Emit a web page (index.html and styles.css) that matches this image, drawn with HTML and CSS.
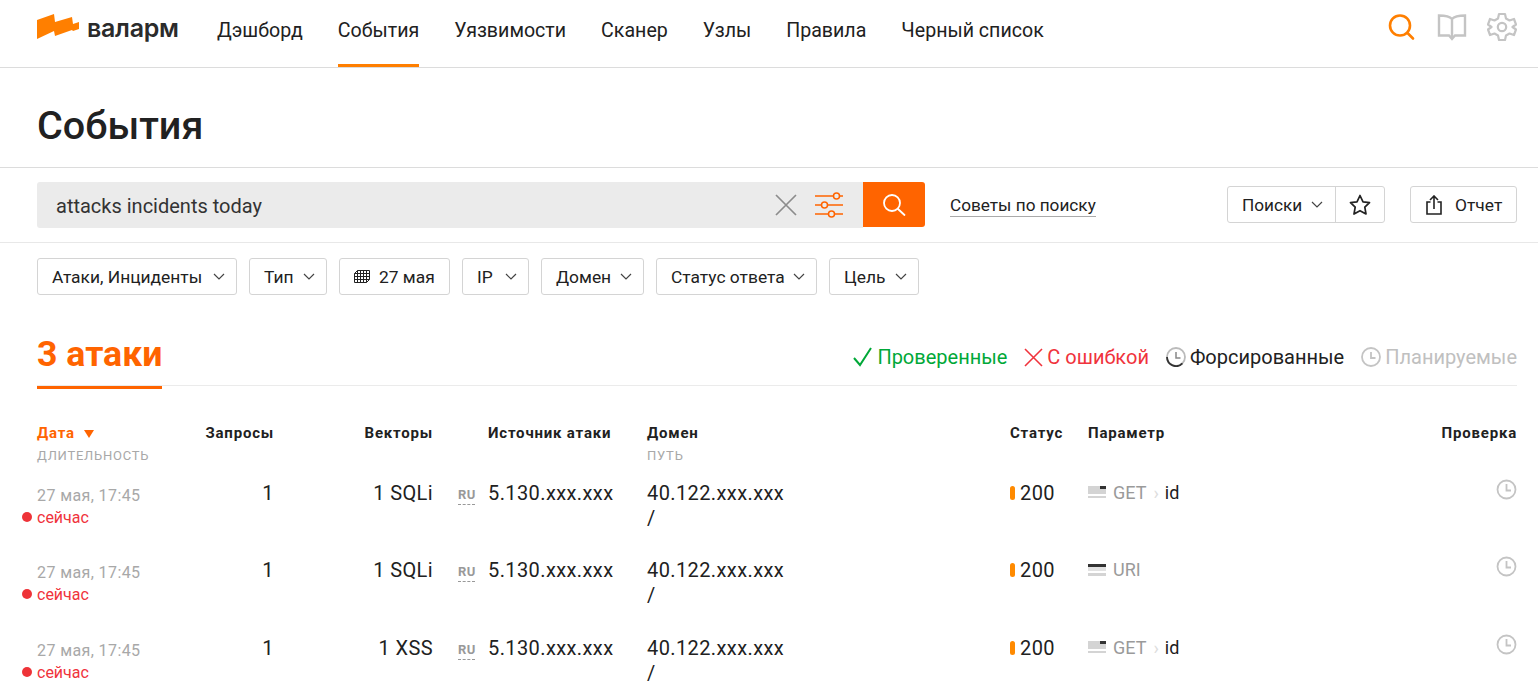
FILE: index.html
```html
<!DOCTYPE html>
<html lang="ru">
<head>
<meta charset="utf-8">
<title>События</title>
<link rel="stylesheet" href="styles.css">
</head>
<body>
<header class="topbar">
  <div class="logo">
    <svg class="logo-mark" width="43" height="26" viewBox="0 0 43 26"><path d="M0 7 L17 1 L18 9 L35 4 L36 11 L42 9 L42 16 L36 18 L35 17 L18 23 L17 18 L0 26 Z" fill="#ff7f00"/></svg>
    <span class="logo-text">валарм</span>
  </div>
  <nav class="nav">
    <a class="nav-item">Дэшборд</a>
    <a class="nav-item active">События</a>
    <a class="nav-item">Уязвимости</a>
    <a class="nav-item">Сканер</a>
    <a class="nav-item">Узлы</a>
    <a class="nav-item">Правила</a>
    <a class="nav-item">Черный список</a>
  </nav>
  <div class="top-icons">
    <svg class="loupe" width="28" height="28" viewBox="0 0 28 28" fill="none" stroke="#ff7f00" stroke-width="2.6" stroke-linecap="round"><circle cx="13" cy="12.5" r="10"/><path d="M20.5 20 L26 25.5"/></svg>
    <svg width="30" height="28" viewBox="0 0 30 28" fill="none" stroke="#c4c4c4" stroke-width="2.4"><path d="M15 6 C12 2.5 6 2.5 2 2.5 V22.5 H12 L15 26 L18 22.5 H28 V2.5 C24 2.5 18 2.5 15 6 Z M15 6 V25"/></svg>
    <svg class="gear" width="30" height="30" viewBox="0 0 30 30" fill="none" stroke="#c4c4c4" stroke-width="2.2" stroke-linejoin="round"><path d="M12 2 H18 L19 6.5 L22.5 8.5 L27 7 L29 12.5 L25.5 15 L29 17.5 L27 23 L22.5 21.5 L19 23.5 L18 28 H12 L11 23.5 L7.5 21.5 L3 23 L1 17.5 L4.5 15 L1 12.5 L3 7 L7.5 8.5 L11 6.5 Z"/><circle cx="15" cy="15" r="4.2"/></svg>
  </div>
</header>

<section class="title-bar"><h1 class="title">События</h1></section>

<section class="search-bar">
  <div class="search-box">
    <span class="search-text">attacks incidents today</span>
    <svg class="clear" width="22" height="22" viewBox="0 0 22 22" stroke="#8c8c8c" stroke-width="1.7" fill="none"><path d="M1 1 L21 21 M21 1 L1 21"/></svg>
    <svg class="tune" width="30" height="28" viewBox="0 0 30 28" stroke="#ff6400" stroke-width="1.5" fill="none"><path d="M1 5 H19 M26 5 H29 M1 14 H7 M14 14 H29 M1 23 H14 M21 23 H29"/><circle cx="22.5" cy="5" r="3"/><circle cx="10.5" cy="14" r="3"/><circle cx="17.5" cy="23" r="3"/></svg>
  </div>
  <button class="search-btn"><svg width="24" height="24" viewBox="0 0 24 24" fill="none" stroke="#fff" stroke-width="1.8" stroke-linecap="round"><circle cx="10" cy="10" r="8"/><path d="M16 16 L22.5 22"/></svg></button>
  <a class="tips">Советы по поиску</a>
  <div class="btn-group">
    <span class="btn-part wide">Поиски<svg class="chev" width="12" height="7" viewBox="0 0 12 7" fill="none" stroke="#444" stroke-width="1.2"><path d="M1 1 L6 6 L11 1"/></svg></span>
    <span class="btn-part star"><svg width="22" height="21" viewBox="0 0 22 21" fill="none" stroke="#222" stroke-width="1.7" stroke-linejoin="round"><path d="M11 1.5 L14 7.8 L20.5 8.6 L15.8 13.2 L17 20 L11 16.7 L5 20 L6.2 13.2 L1.5 8.6 L8 7.8 Z"/></svg></span>
  </div>
  <span class="btn report"><svg width="16" height="20" viewBox="0 0 16 20" fill="none" stroke="#222" stroke-width="1.6"><path d="M4.5 7 H1 V19 H15 V7 H11.5 M8 14 V1.5 M4 5 L8 1 L12 5"/></svg>Отчет</span>
</section>

<section class="filters">
  <span class="btn f1">Атаки, Инциденты<svg class="chev" width="12" height="7" viewBox="0 0 12 7" fill="none" stroke="#444" stroke-width="1.2"><path d="M1 1 L6 6 L11 1"/></svg></span>
  <span class="btn f2">Тип<svg class="chev" width="12" height="7" viewBox="0 0 12 7" fill="none" stroke="#444" stroke-width="1.2"><path d="M1 1 L6 6 L11 1"/></svg></span>
  <span class="btn f3"><svg class="cal" width="16" height="13" viewBox="0 0 16 13" fill="none" stroke="#222" stroke-width="1"><path d="M3.5 .5 H15.5 V9.5 L12.5 12.5 H.5 V3.5 Z M.5 3.5 H15.5 M.5 6.5 H15.5 M.5 9.5 H15.5 M3.5 .5 V12.5 M6.5 .5 V12.5 M9.5 .5 V12.5 M12.5 .5 V12.5"/></svg>27 мая</span>
  <span class="btn f4">IP<svg class="chev" width="12" height="7" viewBox="0 0 12 7" fill="none" stroke="#444" stroke-width="1.2"><path d="M1 1 L6 6 L11 1"/></svg></span>
  <span class="btn f5">Домен<svg class="chev" width="12" height="7" viewBox="0 0 12 7" fill="none" stroke="#444" stroke-width="1.2"><path d="M1 1 L6 6 L11 1"/></svg></span>
  <span class="btn f6">Статус ответа<svg class="chev" width="12" height="7" viewBox="0 0 12 7" fill="none" stroke="#444" stroke-width="1.2"><path d="M1 1 L6 6 L11 1"/></svg></span>
  <span class="btn f7">Цель<svg class="chev" width="12" height="7" viewBox="0 0 12 7" fill="none" stroke="#444" stroke-width="1.2"><path d="M1 1 L6 6 L11 1"/></svg></span>
</section>

<section class="tabs">
  <h2 class="count">3 атаки</h2>
  <div class="legend">
    <span class="legend-item green"><svg width="20" height="20" viewBox="0 0 20 20" fill="none" stroke="#00a838" stroke-width="2"><path d="M1 11 L7 18 L18 1"/></svg>Проверенные</span>
    <span class="legend-item red"><svg width="19" height="19" viewBox="0 0 19 19" fill="none" stroke="#f0333c" stroke-width="1.6"><path d="M1 1 L18 18 M18 1 L1 18"/></svg>С ошибкой</span>
    <span class="legend-item dark"><svg width="20" height="20" viewBox="0 0 20 20" fill="none" stroke-width="1.8"><circle cx="10" cy="10" r="9" stroke="#bbb"/><path d="M1 10 A9 9 0 0 0 16.4 16.4" stroke="#333"/><path d="M10 5 V11 H14.5" stroke="#888" stroke-width="1.5"/></svg>Форсированные</span>
    <span class="legend-item grey"><svg width="20" height="20" viewBox="0 0 20 20" fill="none" stroke="#c4c4c4" stroke-width="1.8"><circle cx="10" cy="10" r="9"/><path d="M10 5 V11 H14.5"/></svg>Планируемые</span>
  </div>
</section>

<section class="table">
  <div class="row head">
    <div><div class="th sort">Дата<span class="arrow"></span></div><div class="sub">ДЛИТЕЛЬНОСТЬ</div></div>
    <div class="th right">Запросы</div>
    <div class="th right">Векторы</div>
    <div class="th src-head">Источник атаки</div>
    <div><div class="th">Домен</div><div class="sub">ПУТЬ</div></div>
    <div class="th">Статус</div>
    <div class="th">Параметр</div>
    <div class="th right">Проверка</div>
  </div>

  <div class="row">
    <div class="date"><div class="when">27 мая, 17:45</div><div class="now">сейчас</div></div>
    <div class="val right">1</div>
    <div class="val right">1 SQLi</div>
    <div class="val src"><span class="cc">RU</span>5.130.xxx.xxx</div>
    <div class="val"><div>40.122.xxx.xxx</div><div class="path">/</div></div>
    <div class="val status"><i class="pill"></i>200</div>
    <div class="val param"><svg class="pic" width="18" height="13" viewBox="0 0 18 13"><rect y="0" width="18" height="8" fill="#d4d4d4"/><rect x="12" y="0" width="6" height="3" fill="#333"/><rect y="10" width="18" height="2" fill="#d4d4d4"/></svg><span class="method">GET</span><span class="sep">›</span><span>id</span></div>
    <div class="right"><svg class="check" width="21" height="21" viewBox="0 0 21 21" fill="none" stroke="#c4c4c4" stroke-width="1.8"><circle cx="10.5" cy="10.5" r="9"/><path d="M10.5 5 V11.5 H15"/></svg></div>
  </div>

  <div class="row">
    <div class="date"><div class="when">27 мая, 17:45</div><div class="now">сейчас</div></div>
    <div class="val right">1</div>
    <div class="val right">1 SQLi</div>
    <div class="val src"><span class="cc">RU</span>5.130.xxx.xxx</div>
    <div class="val"><div>40.122.xxx.xxx</div><div class="path">/</div></div>
    <div class="val status"><i class="pill"></i>200</div>
    <div class="val param"><svg class="pic" width="18" height="13" viewBox="0 0 18 13"><rect y="0" width="18" height="3" fill="#333"/><rect y="3" width="18" height="4" fill="#e2e2e2"/><rect y="9" width="18" height="3" fill="#d4d4d4"/></svg><span class="method">URI</span></div>
    <div class="right"><svg class="check" width="21" height="21" viewBox="0 0 21 21" fill="none" stroke="#c4c4c4" stroke-width="1.8"><circle cx="10.5" cy="10.5" r="9"/><path d="M10.5 5 V11.5 H15"/></svg></div>
  </div>

  <div class="row">
    <div class="date"><div class="when">27 мая, 17:45</div><div class="now">сейчас</div></div>
    <div class="val right">1</div>
    <div class="val right">1 XSS</div>
    <div class="val src"><span class="cc">RU</span>5.130.xxx.xxx</div>
    <div class="val"><div>40.122.xxx.xxx</div><div class="path">/</div></div>
    <div class="val status"><i class="pill"></i>200</div>
    <div class="val param"><svg class="pic" width="18" height="13" viewBox="0 0 18 13"><rect y="0" width="18" height="8" fill="#d4d4d4"/><rect x="12" y="0" width="6" height="3" fill="#333"/><rect y="10" width="18" height="2" fill="#d4d4d4"/></svg><span class="method">GET</span><span class="sep">›</span><span>id</span></div>
    <div class="right"><svg class="check" width="21" height="21" viewBox="0 0 21 21" fill="none" stroke="#c4c4c4" stroke-width="1.8"><circle cx="10.5" cy="10.5" r="9"/><path d="M10.5 5 V11.5 H15"/></svg></div>
  </div>
</section>
</body>
</html>
```

FILE: styles.css
```css
* { box-sizing: border-box; }
html, body { margin: 0; height: 688px; overflow: hidden; }
body { background: #fff; color: #212121; font-family: "Roboto", "Liberation Sans", sans-serif; font-size: 18px; }
svg { display: block; flex: none; }

.topbar { height: 68px; border-bottom: 1px solid #dcdcdc; display: flex; padding: 0 21px 0 37px; }
.logo { display: flex; align-items: center; width: 180px; gap: 7px; }
.logo-mark { margin-top: -16px; }
.logo-text { font-family: "Inter", sans-serif; font-weight: 600; font-size: 25px; letter-spacing: -.3px; color: #2b2b2b; margin-top: -11px; }
.nav { display: flex; gap: 35px; }
.nav-item { height: 67px; line-height: 61px; font-size: 19.6px; color: #212121; white-space: nowrap; }
.nav-item.active { border-bottom: 3px solid #ff7f00; }
.top-icons { margin-left: auto; display: flex; align-items: flex-start; padding-top: 13px; }
.loupe { margin-right: 22px; }
.gear { margin: -1px 0 0 20px; }

.title-bar { height: 100px; border-bottom: 1px solid #dcdcdc; padding: 33px 37px 0; }
.title { margin: 0; font-size: 39.5px; line-height: 50px; font-weight: 500; color: #212121; }

.search-bar { height: 75px; border-bottom: 1px solid #e8e8e8; display: flex; align-items: flex-start; padding: 14px 21px 0 37px; }
.search-box { width: 826px; height: 46px; background: #ebebeb; border-radius: 3px 0 0 3px; display: flex; align-items: center; padding: 0 19px; }
.search-text { font-size: 20px; flex: 1; color: #333; padding-top: 2px; }
.clear { margin-right: 17px; }
.tune { margin-top: -1px; }
.search-btn { width: 62px; height: 45px; background: #ff6400; border: 0; border-radius: 0 3px 3px 0; padding: 0; display: flex; align-items: center; justify-content: center; }
.tips { margin: 13px 0 0 25px; font-size: 17.2px; line-height: 20px; height: 22px; border-bottom: 1px solid #aaa; color: #212121; white-space: nowrap; }
.btn-group { margin: 4px 0 0 auto; display: flex; height: 37px; border: 1px solid #d4d4d4; border-radius: 3px; }
.btn-part { display: flex; align-items: center; font-size: 17.2px; }
.btn-part.wide { width: 108px; padding-left: 14px; border-right: 1px solid #d4d4d4; }
.btn-part.star { width: 48px; justify-content: center; }
.btn { height: 37px; display: inline-flex; align-items: center; border: 1px solid #d4d4d4; border-radius: 3px; padding: 0 11px 0 14px; font-size: 17.4px; white-space: nowrap; }
.chev { margin-left: auto; }
.btn-part .chev { margin-left: 9px; }
.report { margin: 4px 0 0 25px; gap: 13px; padding: 0 13px 0 15px; width: 107px; }
.cal { margin-right: 9px; }
.f1 { width: 200px; }
.f2 { width: 78px; }
.f3 { width: 111px; }
.f4 { width: 67px; }
.f5 { width: 103px; }
.f6 { width: 161px; }
.f7 { width: 90px; }

.filters { display: flex; gap: 12px; padding: 15px 37px 0; }

.tabs { margin: 32px 21px 0 37px; height: 59px; border-bottom: 1px solid #ebebeb; display: flex; align-items: flex-start; justify-content: space-between; }
.count { margin: 0; height: 62px; border-bottom: 3px solid #ff6400; font-size: 35.7px; line-height: 54px; font-weight: 700; color: #ff6400; white-space: nowrap; }
.legend { display: flex; gap: 17px; padding-top: 18px; }
.legend-item { display: flex; align-items: center; gap: 4px; font-size: 20px; line-height: 24px; white-space: nowrap; }
.green { color: #00a838; }
.red { color: #f0333c; }
.dark { color: #212121; }
.grey { color: #c0c0c0; }

.table { margin: 38px 21px 0 37px; }
.row { display: grid; grid-template-columns: 120px 117px 159px 214px 363px 78px 1fr 100px; height: 77.5px; }
.row.head { height: 57.5px; }
.th { font-size: 15px; font-weight: 700; line-height: 18px; letter-spacing: .8px; color: #212121; white-space: nowrap; }
.sort { color: #ff6400; }
.arrow { display: inline-block; margin-left: 9px; border-style: solid; border-width: 8px 5px 0; border-color: #ff6400 transparent transparent; }
.sub { font-size: 13px; line-height: 18px; margin-top: 5px; color: #a8a8a8; letter-spacing: .75px; white-space: nowrap; }
.right { text-align: right; display: block; }
.src-head { padding-left: 55px; }
.val { font-size: 20px; line-height: 24px; letter-spacing: .4px; margin-top: -1px; white-space: nowrap; }
.when { font-size: 16px; line-height: 24px; margin-top: 2px; letter-spacing: .4px; color: #a8a8a8; white-space: nowrap; }
.now { font-size: 16px; line-height: 20px; color: #f0333c; position: relative; }
.now::before { content: ""; position: absolute; left: -15px; top: 4px; width: 10px; height: 10px; border-radius: 50%; background: #ee3338; }
.src { display: flex; align-items: flex-start; padding-left: 25px; }
.cc { width: 17px; margin-right: 13px; font-size: 13px; line-height: 15px; margin-top: 6px; height: 18px; font-weight: 700; letter-spacing: .4px; color: #999; border-bottom: 1px dashed #999; }
.path { line-height: 24px; margin-top: 1px; }
.status { display: flex; align-items: center; height: 24px; }
.pill { width: 5px; height: 14px; border-radius: 3px; background: #ff8a00; margin-right: 5px; }
.param { display: flex; align-items: center; height: 24px; font-size: 18px; letter-spacing: 0; }
.pic { margin-right: 7px; }
.method { color: #9a9a9a; }
.sep { color: #ddd; margin: 0 6px 0 7px; }
.check { margin-left: auto; margin-top: -3px; }
```
